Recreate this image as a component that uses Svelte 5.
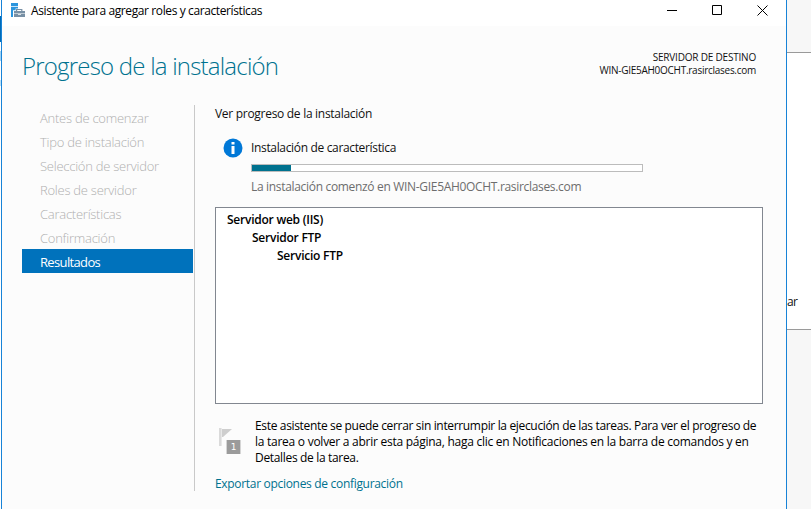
<script>
  const steps = [
    { label: 'Antes de comenzar' },
    { label: 'Tipo de instalación' },
    { label: 'Selección de servidor' },
    { label: 'Roles de servidor' },
    { label: 'Características' },
    { label: 'Confirmación' },
    { label: 'Resultados', active: true }
  ];
  const progress = 10;
  const features = ['Servidor web (IIS)', 'Servidor FTP', 'Servicio FTP'];
</script>

<div class="screen">
  <div class="left-edge"><i></i><b></b><em></em></div>

  <section class="window">
    <header class="titlebar">
      <svg class="app-icon" width="15" height="14" viewBox="0 0 15 14">
        <path fill="#2b95dd" d="M0 0h7v3.2H0zM0 4h7v1.4H4.6v1.8H2V14H0z" />
        <path fill="#7890a5" fill-rule="evenodd" d="M5 6h6.4v2H14v2.2H3V8h2zM6.2 7v1h4V7zM3 11h4v.8h3V11h4v3H3z" />
        <path fill="#b9c6d0" d="M3 10.2h11v.8H3z" />
      </svg>
      <span class="title">Asistente para agregar roles y características</span>
      <div class="controls">
        <svg width="10" height="11" viewBox="0 0 10 11"><path d="M0 5.5h10" /></svg>
        <svg width="10" height="11" viewBox="0 0 10 11"><path d="M.5.5h9v9h-9z" /></svg>
        <svg width="11" height="11" viewBox="0 0 11 11"><path d="M.5.5l10 10M10.5.5l-10 10" /></svg>
      </div>
    </header>

    <div class="heading">
      <h1>Progreso de la instalación</h1>
      <div class="server">
        <div class="dest">SERVIDOR DE DESTINO</div>
        <div class="host">WIN-GIE5AH0OCHT.rasirclases.com</div>
      </div>
    </div>

    <div class="body">
      <nav>
        {#each steps as step}
          <div class="step" class:active={step.active}><span>{step.label}</span></div>
        {/each}
      </nav>

      <main>
        <p class="lead">Ver progreso de la instalación</p>
        <div class="status">
          <svg class="info" width="20" height="20" viewBox="0 0 20 20">
            <circle cx="10" cy="10" r="9.5" fill="#0078d7" />
            <path fill="#fff" d="M8.5 4h3v2.6h-3zM8.5 8h3v8h-3z" />
          </svg>
          <div class="status-text">
            <p class="task">Instalación de característica</p>
            <div class="bar"><div class="fill" style="width: {progress}%"></div></div>
            <p class="started">La instalación comenzó en WIN-GIE5AH0OCHT.rasirclases.com</p>
          </div>
        </div>

        <div class="features">
          {#each features as feature, i}
            <div style="padding-left: {i * 25}px"><span>{feature}</span></div>
          {/each}
        </div>

        <div class="note">
          <svg width="24" height="27" viewBox="0 0 24 27">
            <path fill="#dadada" d="M0 0h2.6v18H0z" />
            <path fill="#cecece" d="M3 1h10L4 9H3z" />
            <path fill="#9b9b9b" d="M7.6 12h13.8v14H7.6z" />
            <text x="14.6" y="22.4" text-anchor="middle">1</text>
          </svg>
          <p>
            <span class="n0">Este asistente se puede cerrar sin interrumpir la ejecución de las tareas. Para ver el progreso de</span>
            <span class="n1">la tarea o volver a abrir esta página, haga clic en Notificaciones en la barra de comandos y en</span>
            <span class="n2">Detalles de la tarea.</span>
          </p>
        </div>
        <span class="export">Exportar opciones de configuración</span>
      </main>
    </div>
  </section>

  <aside><div class="panel"><span>ar</span></div></aside>
</div>

<style>
  :global(body) { margin: 0; }
  .screen {
    display: flex;
    width: 811px;
    height: 509px;
    overflow: hidden;
    background: #f7f7f7;
    font: 12px/16px "Open Sans", "Noto Sans", sans-serif;
    letter-spacing: -0.25px;
    color: #111;
  }
  p, h1 { margin: 0; font-weight: 400; }
  span, p, h1 { white-space: nowrap; }
  .left-edge { width: 1px; background: #fff; display: flex; flex-direction: column; }
  .left-edge i { height: 26px; margin-top: 16px; background: #006bb7; }
  .left-edge b { height: 10px; margin-top: 9px; background: #9fd2f4; }
  .left-edge em { height: 6px; margin-top: 19px; background: #b9e0f7; }
  .window {
    width: 784px;
    height: 509px;
    flex: none;
    border: solid #1883d7;
    border-width: 0 1px;
    background: #fcfcfc;
  }
  .titlebar { display: flex; height: 26px; background: #fff; }
  .app-icon { margin: 3px 0 0 9px; }
  .title { margin: 3px 0 0 5px; color: #000; letter-spacing: -0.39px; }
  .controls { display: flex; margin: 5px 18px 0 auto; gap: 35px; }
  .controls svg { fill: none; stroke: #000; stroke-width: 1; }

  .heading { display: flex; justify-content: space-between; height: 79px; }
  h1 {
    padding: 23px 0 0 20px;
    font-size: 24px;
    line-height: 34px;
    font-weight: 300;
    letter-spacing: -0.79px;
    color: #00728f;
  }
  .server { padding: 25px 30px 0 0; font-size: 10px; line-height: 13px; text-align: right; }
  .dest { letter-spacing: -0.2px; }
  .host { letter-spacing: -0.27px; }

  .body { display: flex; }
  nav { width: 172px; height: 386px; padding-left: 20px; border-right: 1px solid #c9c9c9; }
  .step {
    box-sizing: border-box;
    width: 171px;
    height: 24px;
    padding: 1px 0 0 18px;
    font-size: 13px;
    line-height: 24px;
    letter-spacing: -0.25px;
    color: #b0b0b0;
    font-weight: 300;
  }
  .active { background: #0072bc; color: #fff; font-weight: 400; letter-spacing: -0.65px; }

  main { padding: 1px 0 0 20px; width: 548px; }
  .lead { letter-spacing: -0.29px; }
  .status { display: flex; margin-top: 16px; }
  .info { margin-left: 8px; }
  .status-text { margin-left: 8px; }
  .task { margin-top: 2px; letter-spacing: -0.34px; }
  .bar { box-sizing: border-box; width: 392px; height: 8px; margin-top: 8px; border: 1px solid #bcbcbc; background: #fff; }
  .fill { height: 6px; background: #00728f; }
  .started { margin-top: 7px; color: #6d6d6d; letter-spacing: -0.32px; }
  .features {
    box-sizing: border-box;
    width: 548px;
    height: 197px;
    margin-top: 12px;
    padding: 3px 11px;
    border: 1px solid #828790;
    background: #fff;
    line-height: 18px;
    font-weight: 600;
    letter-spacing: -0.24px;
    color: #000;
  }
  .note { display: flex; margin-top: 14px; color: #000; }
  .note svg { margin: 10px 0 0 4px; flex: none; }
  .note text { font: 9px "DejaVu Sans", sans-serif; fill: #fff; letter-spacing: 0; }
  .note p { display: flex; flex-direction: column; margin-left: 12px; }
  .n0 { letter-spacing: -0.34px; }
  .n1 { letter-spacing: -0.26px; }
  .n2 { letter-spacing: -0.33px; }
  .export { display: block; margin-top: 10px; color: #00728f; letter-spacing: -0.31px; }

  aside { flex: 1; padding-top: 52px; }
  .panel {
    box-sizing: border-box;
    height: 278px;
    border: solid #9a9a9a;
    border-width: 1px 0;
    background: #fff;
    padding-top: 241px;
  }
  .panel span { letter-spacing: -0.6px; }
</style>
